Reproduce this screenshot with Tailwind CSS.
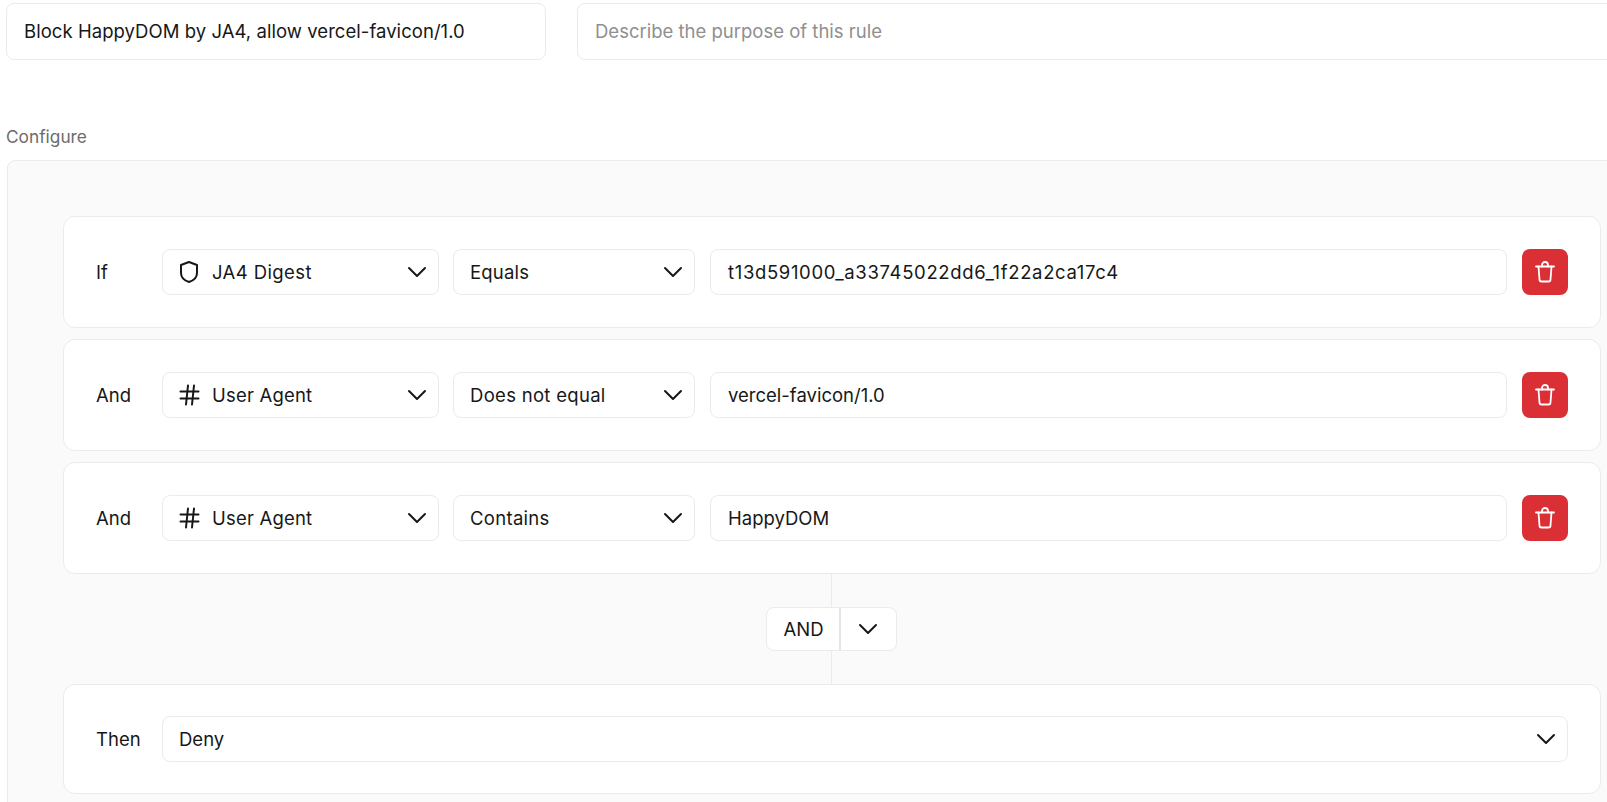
<!DOCTYPE html>
<html>
<head>
<meta charset="utf-8">
<script src="https://cdn.jsdelivr.net/npm/@tailwindcss/browser@4"></script>
</head>
<body class="bg-white overflow-hidden h-[802px] font-['Inter',sans-serif] text-[18.5px] text-[#171717]">
<div class="w-[1700px] pt-[3px] pl-[6px]">
  <div class="flex gap-[31px]">
    <div class="w-[540px] h-[57px] flex items-center px-[17px] rounded-lg border border-[#ebebeb] bg-white tracking-[0.05px]">Block HappyDOM by JA4, allow vercel-favicon/1.0</div>
    <div class="flex-1 h-[57px] flex items-center px-[17px] rounded-lg border border-[#ebebeb] bg-white text-[#8f8f8f]">Describe the purpose of this rule</div>
  </div>
  <div class="mt-[67px] h-[20px] flex items-center text-[#6b6b6b] text-[17.300px]">Configure</div>
  <div class="mt-[13px] ml-px w-[1680px] h-[660px] rounded-t-lg border border-[#ebebeb] bg-[#fafafa] pt-[55px] pl-[55px]">
    <div class="w-[1538px] flex flex-col">
      <div class="h-[112px] rounded-xl border border-[#ebebeb] bg-white flex items-center pl-[32px] pr-[32px]">
        <span class="w-[66px] pt-[2px]">If</span>
        <div class="w-[277px] h-[46px] rounded-lg border border-[#ebebeb] flex items-center pl-[14px] pr-[9px]">
          <svg class="w-6 h-6 mr-[11px]" viewBox="0 0 24 24" fill="none" stroke="#171717" stroke-width="2" stroke-linecap="round" stroke-linejoin="round"><path d="M12 2 20 5V13c0 4.500-3.500 7.500-8 9-4.500-1.500-8-4.500-8-9V5Z"/></svg>
          <span class="flex-1 pt-[2px] tracking-[0.4px]">JA4 Digest</span>
          <svg class="w-6 h-6" viewBox="0 0 24 24" fill="none" stroke="#171717" stroke-width="2" stroke-linecap="round" stroke-linejoin="round"><path d="m4 8 8 8 8-8"/></svg>
        </div>
        <div class="ml-[14px] w-[242px] h-[46px] rounded-lg border border-[#ebebeb] flex items-center pl-[16px] pr-[9px]">
          <span class="flex-1 pt-[2px] tracking-[0.2px]">Equals</span>
          <svg class="w-6 h-6" viewBox="0 0 24 24" fill="none" stroke="#171717" stroke-width="2" stroke-linecap="round" stroke-linejoin="round"><path d="m4 8 8 8 8-8"/></svg>
        </div>
        <div class="ml-[15px] flex-1 h-[46px] rounded-lg border border-[#ebebeb] flex items-center px-[17px] pt-[2px] tracking-[0.65px]">t13d591000_a33745022dd6_1f22a2ca17c4</div>
        <button class="ml-[15px] w-[46px] h-[46px] rounded-lg bg-[#da2f35] flex items-center justify-center">
          <svg class="w-6 h-6" viewBox="0 0 24 24" fill="none" stroke="#fff" stroke-width="1.800" stroke-linecap="round" stroke-linejoin="round"><path d="M3 6.500h18"/><path d="M5.500 6.500l1 13a2 2 0 0 0 2 2h7a2 2 0 0 0 2-2l1-13"/><path d="M9 6.500V5a3 3 0 0 1 6 0v1.500"/></svg>
        </button>
      </div>
      <div class="mt-[11px] h-[112px] rounded-xl border border-[#ebebeb] bg-white flex items-center pl-[32px] pr-[32px]">
        <span class="w-[66px] pt-[2px]">And</span>
        <div class="w-[277px] h-[46px] rounded-lg border border-[#ebebeb] flex items-center pl-[14px] pr-[9px]">
          <svg class="w-6 h-6 mr-[11px]" viewBox="0 0 24 24" fill="none" stroke="#171717" stroke-width="2" stroke-linecap="round" stroke-linejoin="round"><path d="M3.500 8.500h18M3.500 15.500h18M11 2.500 9 21.500M17 2.500l-2 19"/></svg>
          <span class="flex-1 pt-[2px] tracking-[0.2px]">User Agent</span>
          <svg class="w-6 h-6" viewBox="0 0 24 24" fill="none" stroke="#171717" stroke-width="2" stroke-linecap="round" stroke-linejoin="round"><path d="m4 8 8 8 8-8"/></svg>
        </div>
        <div class="ml-[14px] w-[242px] h-[46px] rounded-lg border border-[#ebebeb] flex items-center pl-[16px] pr-[9px]">
          <span class="flex-1 pt-[2px] tracking-[0.3px]">Does not equal</span>
          <svg class="w-6 h-6" viewBox="0 0 24 24" fill="none" stroke="#171717" stroke-width="2" stroke-linecap="round" stroke-linejoin="round"><path d="m4 8 8 8 8-8"/></svg>
        </div>
        <div class="ml-[15px] flex-1 h-[46px] rounded-lg border border-[#ebebeb] flex items-center px-[17px] pt-[2px]">vercel-favicon/1.0</div>
        <button class="ml-[15px] w-[46px] h-[46px] rounded-lg bg-[#da2f35] flex items-center justify-center">
          <svg class="w-6 h-6" viewBox="0 0 24 24" fill="none" stroke="#fff" stroke-width="1.800" stroke-linecap="round" stroke-linejoin="round"><path d="M3 6.500h18"/><path d="M5.500 6.500l1 13a2 2 0 0 0 2 2h7a2 2 0 0 0 2-2l1-13"/><path d="M9 6.500V5a3 3 0 0 1 6 0v1.500"/></svg>
        </button>
      </div>
      <div class="mt-[11px] h-[112px] rounded-xl border border-[#ebebeb] bg-white flex items-center pl-[32px] pr-[32px]">
        <span class="w-[66px] pt-[2px]">And</span>
        <div class="w-[277px] h-[46px] rounded-lg border border-[#ebebeb] flex items-center pl-[14px] pr-[9px]">
          <svg class="w-6 h-6 mr-[11px]" viewBox="0 0 24 24" fill="none" stroke="#171717" stroke-width="2" stroke-linecap="round" stroke-linejoin="round"><path d="M3.500 8.500h18M3.500 15.500h18M11 2.500 9 21.500M17 2.500l-2 19"/></svg>
          <span class="flex-1 pt-[2px] tracking-[0.2px]">User Agent</span>
          <svg class="w-6 h-6" viewBox="0 0 24 24" fill="none" stroke="#171717" stroke-width="2" stroke-linecap="round" stroke-linejoin="round"><path d="m4 8 8 8 8-8"/></svg>
        </div>
        <div class="ml-[14px] w-[242px] h-[46px] rounded-lg border border-[#ebebeb] flex items-center pl-[16px] pr-[9px]">
          <span class="flex-1 pt-[2px] tracking-[0.3px]">Contains</span>
          <svg class="w-6 h-6" viewBox="0 0 24 24" fill="none" stroke="#171717" stroke-width="2" stroke-linecap="round" stroke-linejoin="round"><path d="m4 8 8 8 8-8"/></svg>
        </div>
        <div class="ml-[15px] flex-1 h-[46px] rounded-lg border border-[#ebebeb] flex items-center px-[17px] pt-[2px]">HappyDOM</div>
        <button class="ml-[15px] w-[46px] h-[46px] rounded-lg bg-[#da2f35] flex items-center justify-center">
          <svg class="w-6 h-6" viewBox="0 0 24 24" fill="none" stroke="#fff" stroke-width="1.800" stroke-linecap="round" stroke-linejoin="round"><path d="M3 6.500h18"/><path d="M5.500 6.500l1 13a2 2 0 0 0 2 2h7a2 2 0 0 0 2-2l1-13"/><path d="M9 6.500V5a3 3 0 0 1 6 0v1.500"/></svg>
        </button>
      </div>
      <div class="h-[110px] flex items-center justify-center relative pr-[2px]">
        <div class="absolute top-0 bottom-0 left-[768px] w-px bg-[#ebebeb]"></div>
        <div class="relative flex h-[44px] rounded-lg border border-[#ebebeb] bg-white">
          <span class="w-[74px] flex items-center justify-center border-r-2 border-[#e5e5e5] pt-[2px] pl-[2px]">AND</span>
          <span class="w-[55px] flex items-center justify-center">
            <svg class="w-6 h-6" viewBox="0 0 24 24" fill="none" stroke="#171717" stroke-width="2" stroke-linecap="round" stroke-linejoin="round"><path d="m4 8 8 8 8-8"/></svg>
          </span>
        </div>
      </div>
      <div class="h-[110px] rounded-xl border border-[#ebebeb] bg-white flex items-center pl-[32px] pr-[32px]">
        <span class="w-[66px] pt-[2px]">Then</span>
        <div class="flex-1 h-[46px] rounded-lg border border-[#ebebeb] flex items-center pl-[16px] pr-[9px]">
          <span class="flex-1 pt-[2px]">Deny</span>
          <svg class="w-6 h-6" viewBox="0 0 24 24" fill="none" stroke="#171717" stroke-width="2" stroke-linecap="round" stroke-linejoin="round"><path d="m4 8 8 8 8-8"/></svg>
        </div>
      </div>
    </div>
  </div>
</div>
</body>
</html>
